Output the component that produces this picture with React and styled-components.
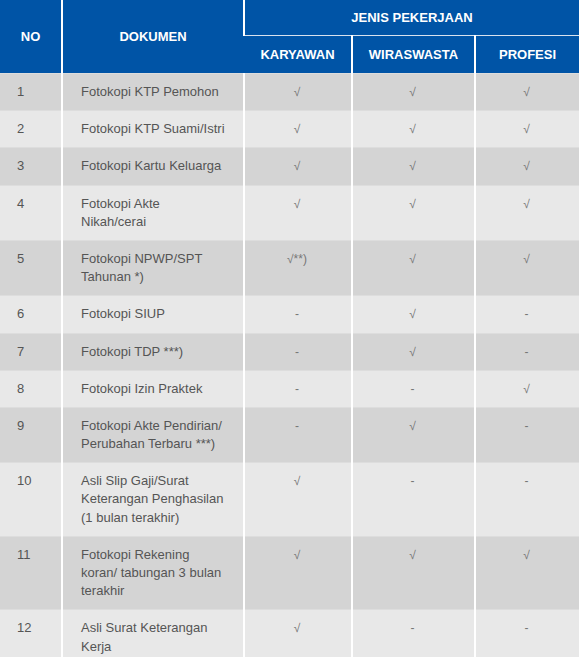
import React from "react";
import styled, { createGlobalStyle } from "styled-components";

const GlobalStyle = createGlobalStyle`
  body {
    margin: 0;
    background: #ffffff;
    font-family: "Liberation Sans", Arial, sans-serif;
  }
`;

const Table = styled.table`
  width: 579px;
  table-layout: fixed;
  border-collapse: collapse;
  font-size: 13px;
`;

const Head = styled.th`
  background: #0054a6;
  color: #ffffff;
  font-weight: bold;
  font-size: 13px;
  text-align: center;
  vertical-align: middle;
  padding: 0;
  height: ${(p) => p.h || 35}px;
  border-left: 2px solid #ffffff;
  border-bottom: ${(p) => (p.line ? "1px solid #d9e2ee" : "0")};
  &:first-child {
    border-left: 0;
  }
`;

const Row = styled.tr`
  background: ${(p) => (p.odd ? "#d4d4d4" : "#e8e8e8")};
  border-top: 1px solid #dddddd;
`;

const Cell = styled.td`
  color: #555555;
  line-height: 1.4;
  padding: 9px 14px 9px 18px;
  vertical-align: top;
  text-align: left;
  border-left: 2px solid #ffffff;
  &:first-child {
    border-left: 0;
    padding-left: 17px;
  }
`;

const MarkCell = styled(Cell)`
  text-align: center;
  padding-left: 14px;
  padding-right: 16px;
`;

const Mark = styled.span`
  color: #777777;
  font-size: 12px;
  line-height: 1;
`;

const rows = [
  ["Fotokopi KTP Pemohon", "√", "√", "√"],
  ["Fotokopi KTP Suami/Istri", "√", "√", "√"],
  ["Fotokopi Kartu Keluarga", "√", "√", "√"],
  ["Fotokopi Akte\nNikah/cerai", "√", "√", "√"],
  ["Fotokopi NPWP/SPT\nTahunan *)", "√**)", "√", "√"],
  ["Fotokopi SIUP", "-", "√", "-"],
  ["Fotokopi TDP ***)", "-", "√", "-"],
  ["Fotokopi Izin Praktek", "-", "-", "√"],
  ["Fotokopi Akte Pendirian/\nPerubahan Terbaru ***)", "-", "√", "-"],
  ["Asli Slip Gaji/Surat\nKeterangan Penghasilan\n(1 bulan terakhir)", "√", "-", "-"],
  ["Fotokopi Rekening\nkoran/ tabungan 3 bulan\nterakhir", "√", "√", "√"],
  ["Asli Surat Keterangan\nKerja", "√", "-", "-"],
];

export default function App() {
  return (
    <>
      <GlobalStyle />
      <Table>
        <colgroup>
          <col style={{ width: 62 }} />
          <col style={{ width: 182 }} />
          <col style={{ width: 108 }} />
          <col style={{ width: 123 }} />
          <col style={{ width: 104 }} />
        </colgroup>
        <thead>
          <tr>
            <Head rowSpan={2}>NO</Head>
            <Head rowSpan={2}>DOKUMEN</Head>
            <Head colSpan={3} line h={35}>
              JENIS PEKERJAAN
            </Head>
          </tr>
          <tr>
            <Head h={37}>KARYAWAN</Head>
            <Head h={37}>WIRASWASTA</Head>
            <Head h={37}>PROFESI</Head>
          </tr>
        </thead>
        <tbody>
          {rows.map((r, i) => (
            <Row key={i} odd={i % 2 === 0}>
              <Cell>{i + 1}</Cell>
              <Cell>
                {r[0].split("\n").map((l, j) => (
                  <div key={j}>{l}</div>
                ))}
              </Cell>
              {r.slice(1).map((m, j) => (
                <MarkCell key={j}>
                  <Mark>{m}</Mark>
                </MarkCell>
              ))}
            </Row>
          ))}
        </tbody>
      </Table>
    </>
  );
}
